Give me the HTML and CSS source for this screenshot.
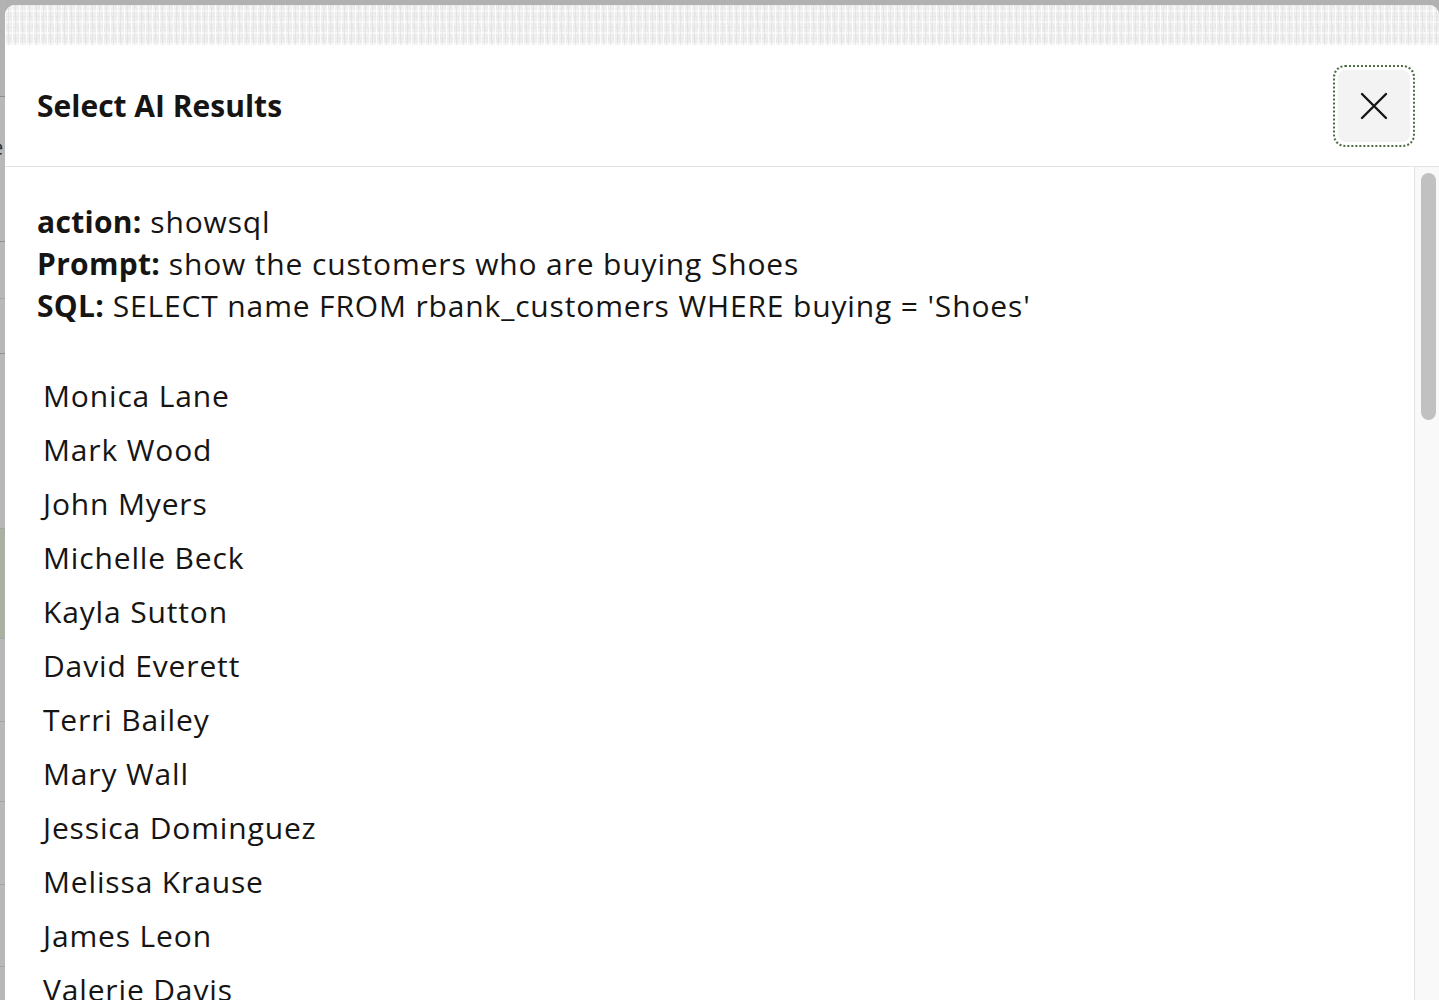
FILE: index.html
```html
<!DOCTYPE html>
<html lang="en">
<head>
<meta charset="utf-8">
<title>Select AI Results</title>
<link rel="stylesheet" href="styles.css">
</head>
<body>
<div class="page">
  <div class="backdrop-strip">
    <div class="strip-row r1"></div>
    <div class="strip-row r2"><span class="strip-glyph">e</span></div>
    <div class="strip-row r3"></div>
    <div class="strip-row r4"></div>
    <div class="strip-row r5"></div>
    <div class="strip-row r6 green"></div>
    <div class="strip-row r7"></div>
    <div class="strip-row r8"></div>
    <div class="strip-row r9"></div>
    <div class="strip-row r10"></div>
    <div class="strip-row r11"></div>
  </div>
  <div class="dialog">
    <div class="texture"></div>
    <div class="dialog-header">
      <h1 class="dialog-title">Select AI Results</h1>
      <button class="close-btn" aria-label="Close">
        <span class="close-inner">
          <svg width="28" height="28" viewBox="0 0 28 28" aria-hidden="true">
            <path d="M2 2 L26 26 M26 2 L2 26" stroke="#161513" stroke-width="2.4" fill="none" stroke-linecap="round"/>
          </svg>
        </span>
      </button>
    </div>
    <div class="dialog-body">
      <div class="content">
        <div class="meta">
          <div><b>action:</b> showsql</div>
          <div><b>Prompt:</b> show the customers who are buying Shoes</div>
          <div><b>SQL:</b> SELECT name FROM rbank_customers WHERE buying = 'Shoes'</div>
        </div>
        <ul class="names">
          <li>Monica Lane</li>
          <li>Mark Wood</li>
          <li>John Myers</li>
          <li>Michelle Beck</li>
          <li>Kayla Sutton</li>
          <li>David Everett</li>
          <li>Terri Bailey</li>
          <li>Mary Wall</li>
          <li>Jessica Dominguez</li>
          <li>Melissa Krause</li>
          <li>James Leon</li>
          <li>Valerie Davis</li>
          <li>Robert Hall</li>
        </ul>
      </div>
      <div class="scrolltrack">
        <div class="thumb"></div>
      </div>
    </div>
  </div>
</div>
</body>
</html>
```

FILE: styles.css
```css
html, body {
  margin: 0;
  padding: 0;
  height: 100%;
  overflow: hidden;
}
body {
  background: #b1b1b1;
  font-family: "Open Sans", "Noto Sans", sans-serif;
  color: #161513;
}
.page {
  display: flex;
  padding-top: 5px;
  height: 1000px;
  box-sizing: border-box;
}
.backdrop-strip {
  width: 5px;
  flex: none;
  display: flex;
  flex-direction: column;
  margin-top: -5px;
  background: #b4b4b4;
  overflow: hidden;
}
.strip-row {
  border-bottom: 1px solid #8f8f8f;
  flex: none;
  background: #b8b8b8;
}
.strip-row.r1 { height: 96px; background: #b3b3b3; }
.strip-row.r2 { height: 144px; position: relative; }
.strip-glyph {
  position: absolute;
  left: -9px;
  top: 34px;
  font-size: 22px;
  color: #333;
}
.strip-row.r3 { height: 56px; border-bottom-color: #a5a5a5; }
.strip-row.r4 { height: 54px; }
.strip-row.r5 { height: 174px; border-bottom-color: #a5a5a5; }
.strip-row.green { height: 109px; background: #a9b2a2; border-bottom-color: #a5a5a5; }
.strip-row.r7 { height: 82px; border-bottom-color: #a5a5a5; }
.strip-row.r8 { height: 79px; border-bottom-color: #a5a5a5; }
.strip-row.r9 { height: 82px; border-bottom-color: #a5a5a5; }
.strip-row.r10 { height: 81px; border-bottom-color: #a5a5a5; }
.strip-row.r11 { height: 60px; }

.dialog {
  flex: 1;
  background: #fff;
  border-radius: 10px 10px 0 0;
  overflow: hidden;
  display: flex;
  flex-direction: column;
}
.texture {
  height: 40px;
  flex: none;
  background-color: #efefef;
  background-image:
    repeating-linear-gradient(90deg, rgba(255,255,255,0.8) 0 1px, transparent 1px 3px, rgba(222,222,222,0.6) 3px 4px, transparent 4px 7px),
    repeating-linear-gradient(0deg, rgba(255,255,255,0.55) 0 2px, transparent 2px 6px, rgba(228,228,228,0.5) 6px 7px, transparent 7px 11px),
    repeating-linear-gradient(80deg, rgba(228,228,228,0.6) 0 1px, transparent 1px 5px);
}
.dialog-header {
  height: 121px;
  flex: none;
  display: flex;
  align-items: center;
  justify-content: space-between;
  padding: 0 24px 0 32px;
  border-bottom: 1px solid #e3e3e3;
}
.dialog-title {
  margin: 0;
  font-size: 30px;
  font-weight: 700;
  letter-spacing: 0;
  color: #161513;
}
.close-btn {
  width: 82px;
  height: 82px;
  padding: 0;
  border: 2px dotted #4f6d44;
  border-radius: 12px;
  background: #fff;
  display: flex;
  align-items: center;
  justify-content: center;
  cursor: pointer;
}
.close-inner {
  width: 72px;
  height: 72px;
  border-radius: 8px;
  background: #f3f3f3;
  display: flex;
  align-items: center;
  justify-content: center;
}
.dialog-body {
  flex: 1;
  display: flex;
  min-height: 0;
}
.content {
  flex: 1;
  padding: 34px 32px 0 32px;
  overflow: hidden;
}
.meta {
  font-size: 30px;
  line-height: 42px;
  letter-spacing: 0.85px;
}
.meta b { font-weight: 700; letter-spacing: 0.3px; }
.names {
  list-style: none;
  margin: 42px 0 0 0;
  padding: 0 0 0 6px;
  font-size: 30px;
  line-height: 54px;
  letter-spacing: 0.85px;
}
.scrolltrack {
  width: 25px;
  flex: none;
  border-left: 1px solid #e3e3e3;
  background: #f9f9f9;
  padding: 6px 4px 0 6px;
  box-sizing: border-box;
}
.thumb {
  width: 15px;
  height: 247px;
  border-radius: 8px;
  background: #c1c1c1;
}
```
